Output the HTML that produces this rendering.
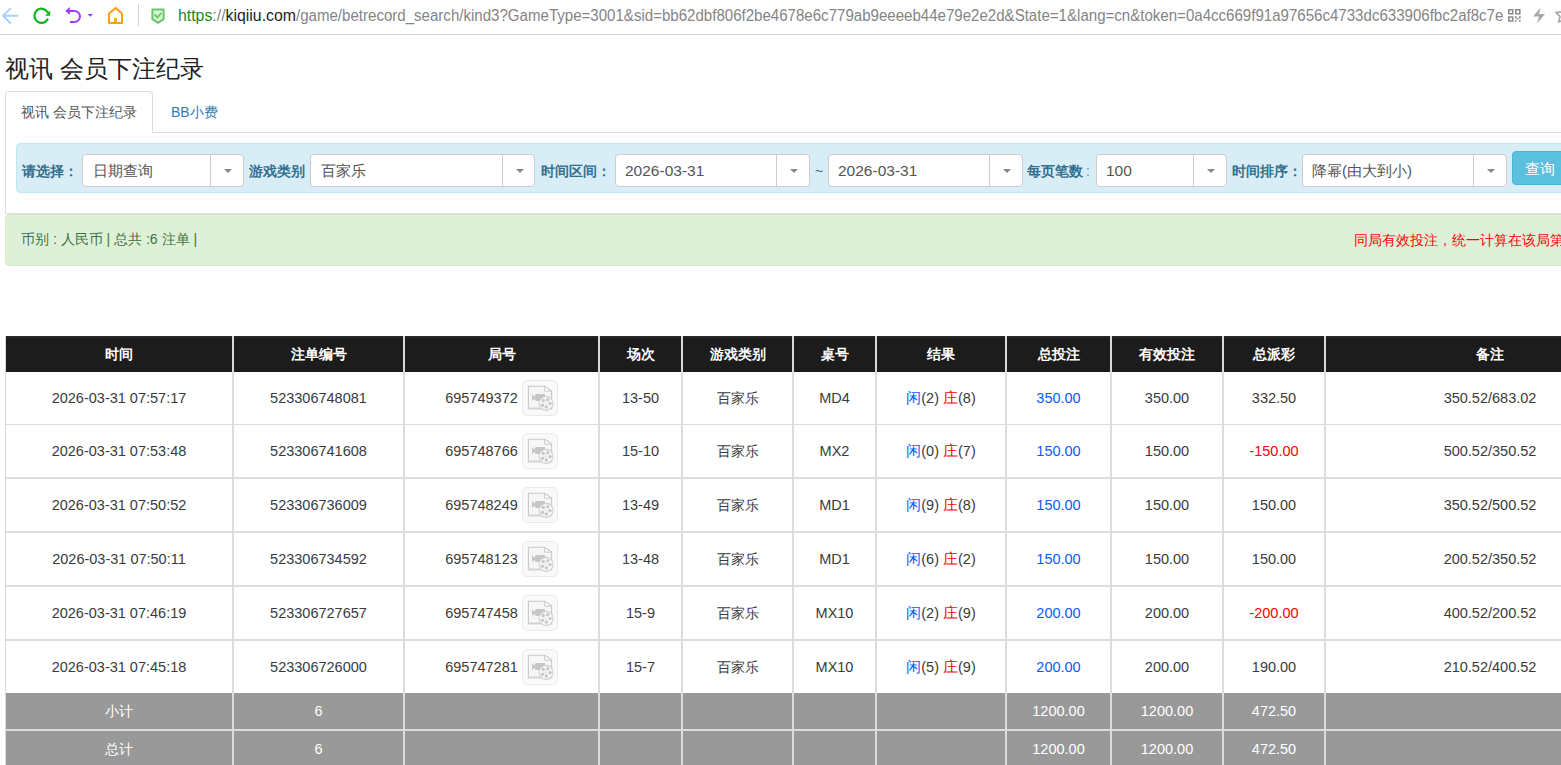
<!DOCTYPE html>
<html><head><meta charset="utf-8">
<style>
*{box-sizing:border-box;margin:0;padding:0}
html,body{width:1561px;height:765px;overflow:hidden;background:#fff}
body{font-family:"Liberation Sans",sans-serif;color:#3b3b3b;position:relative}
.abs{position:absolute}
#bar{position:absolute;left:0;top:0;width:1561px;height:35px;background:#fff;border-bottom:1px solid #cfcfcf}
#url{position:absolute;left:178px;top:6px;font-size:16px;line-height:20px;white-space:nowrap;color:#858585;transform-origin:0 0;transform:scaleX(0.99)}
#url2{position:absolute;left:296px;top:6px;font-size:16px;line-height:20px;white-space:nowrap;color:#858585;transform-origin:0 0;transform:scaleX(0.9415)}
#url .g{color:#1a8a1a}
#url .d{color:#1e1e1e}
#title{position:absolute;left:5px;top:52.5px;font-size:24px;line-height:32px;color:#222;white-space:nowrap}
.tab{position:absolute;font-size:14px;line-height:16px;white-space:nowrap}
#tab1box{position:absolute;left:5px;top:91px;width:148px;height:42px;border:1px solid #ddd;border-bottom:none;border-radius:4px 4px 0 0;background:#fff}
#tabline{position:absolute;left:152px;top:132px;width:1409px;height:1px;background:#ddd}
#pane{position:absolute;left:5px;top:132px;width:1600px;height:82px;border-left:1px solid #ddd;border-bottom:1px solid #ddd}
#filter{position:absolute;left:16px;top:143px;width:1600px;height:50px;background:#d9edf7;border:1px solid #bce8f1;border-radius:4px}
.lbl{position:absolute;top:162px;font-size:14px;line-height:18px;font-weight:bold;color:#31708f;white-space:nowrap}
.sel{position:absolute;top:154px;height:33px;background:#fff;border:1px solid #ccc;border-radius:4px}
.sel .tx{position:absolute;left:10px;top:6px;font-size:15px;line-height:20px;color:#555;white-space:nowrap}
.sel .dv{position:absolute;top:0;bottom:0;width:1px;background:#ccc}
.sel .ct{position:absolute;top:14px;width:0;height:0;border-left:4px solid transparent;border-right:4px solid transparent;border-top:4.5px solid #888}
#btn{position:absolute;left:1512px;top:151px;width:80px;height:34px;background:#5bc0de;border:1px solid #46b8da;border-radius:4px}
#btn span{position:absolute;left:12px;top:7.5px;font-size:14.5px;line-height:18px;color:#fff}
#alert{position:absolute;left:5px;top:214px;width:1600px;height:52px;background:#dff0d8;border:1px solid #d6e9c6;border-radius:4px}
#alert .l{position:absolute;left:15px;top:16px;font-size:14px;line-height:16px;color:#3c763d;white-space:nowrap}
#alert .r{position:absolute;left:1348px;top:16.5px;font-size:14px;line-height:16px;color:#f00;white-space:nowrap}
/* table */
#tbl{position:absolute;left:5px;top:336px;width:1700px;height:430px}
.hd{position:absolute;top:336px;height:36px;background:linear-gradient(#2c2c2c 0,#1c1c1c 3px)}
.cell{position:absolute;text-align:center;white-space:nowrap;font-size:14.5px;line-height:18px}
.vl{position:absolute;width:2px}
.hl{position:absolute;left:6px;width:1600px;background:#dcdcdc}
.cj{font-size:14px}
.gr{position:absolute;left:6px;width:1600px;background:#999}
.ic{position:absolute;width:36px;height:35px;border:1px solid #ececec;border-radius:5px;background:#f8f8f8}
.b{color:#0a5cff}
.rd{color:#f00}
</style></head><body>
<div id="bar">
  <svg class="abs" style="left:0;top:0" width="1561" height="34" viewBox="0 0 1561 34">
    <!-- back arrow -->
    <g fill="none" stroke="#a9d0ff" stroke-width="2" stroke-linecap="round" stroke-linejoin="round">
      <path d="M10.3 8.6 L3 15.8 L10.3 23 M3 15.8 H17.3"/>
    </g>
    <!-- refresh -->
    <g fill="none" stroke="#11b51a" stroke-width="2.2" stroke-linecap="round">
      <path d="M47.6 19.4 A7.1 7.1 0 1 1 47.6 12.2"/>
    </g>
    <path d="M50.2 10.6 L50.2 15.8 L45 15.8 Z" fill="#11b51a"/>
    <!-- undo -->
    <g fill="none" stroke="#a23cff" stroke-width="2" stroke-linecap="butt">
      <path d="M69 10.9 H74.4 A5.55 5.55 0 0 1 74.4 22 H70"/>
    </g>
    <path d="M65.2 11 L69.8 7 L69.8 15 Z" fill="#a23cff"/>
    <path d="M87.5 13.9 H93.1 L90.3 16.8 Z" fill="#a23cff"/>
    <!-- home -->
    <g fill="none" stroke="#ff9f0a" stroke-width="2" stroke-linejoin="round">
      <path d="M109 23 V13.6 L115.5 7.9 L122 13.6 V23 Z"/>
    </g>
    <rect x="114.2" y="18" width="2.6" height="5" fill="#ff9f0a"/>
    <!-- separator -->
    <rect x="138" y="4" width="1" height="22" fill="#d0d0d0"/>
    <!-- shield -->
    <path d="M152.4 9.4 H163.6 V19.2 L158 22.8 L152.4 19.2 Z" fill="#d2fbd2" stroke="#6cc46c" stroke-width="2" stroke-linejoin="round"/>
    <path d="M154.4 14.3 L157.5 17.4 L161.3 13" fill="none" stroke="#6cc46c" stroke-width="1.9"/>
    <!-- qr -->
    <g fill="#8a8a8a">
      <path fill-rule="evenodd" d="M1508 9 h5.5 v5.6 h-5.5z M1509.6 10.6 v2.4 h2.3 v-2.4z"/>
      <path fill-rule="evenodd" d="M1515 9 h5.6 v5.6 h-5.6z M1516.6 10.6 v2.4 h2.4 v-2.4z"/>
      <path fill-rule="evenodd" d="M1508 16.2 h5.5 v5.6 h-5.5z M1509.6 17.8 v2.4 h2.3 v-2.4z"/>
      <rect x="1515" y="16.2" width="1.6" height="2.2"/>
      <rect x="1519" y="16.2" width="1.6" height="2.2"/>
      <rect x="1516.6" y="18.2" width="2.4" height="1.2"/>
      <rect x="1515" y="20.2" width="1.6" height="1.6"/>
      <rect x="1519" y="20.2" width="1.6" height="1.6"/>
    </g>
    <!-- lightning -->
    <path d="M1540.6 7.5 L1533 16.5 H1539 L1537 23.5 L1545 14 H1539 Z" fill="#a9a9a9"/>
    <!-- star -->
    <path d="M1566 12 L1556 12.4 L1560 16.6 L1558.6 22 L1566 19" fill="none" stroke="#a9a9a9" stroke-width="1.7" stroke-linejoin="round"/>
  </svg>
  <div id="url"><span class="g">https</span>://<span class="d">kiqiiu.com</span></div><div id="url2">/game/betrecord_search/kind3?GameType=3001&amp;sid=bb62dbf806f2be4678e6c779ab9eeeeb44e79e2e2d&amp;State=1&amp;lang=cn&amp;token=0a4cc669f91a97656c4733dc633906fbc2af8c7e</div>
</div>

<div id="title">视讯 会员下注纪录</div>
<div id="pane"></div>
<div id="tabline"></div>
<div id="tab1box"></div>
<div class="tab" style="left:21px;top:104px;color:#555">视讯 会员下注纪录</div>
<div class="tab" style="left:171px;top:104px;color:#337ab7">BB小费</div>

<div id="filter"></div>
<div class="lbl" style="left:22px">请选择：</div>
<div class="sel" style="left:82px;width:162px"><span class="tx">日期查询</span><span class="dv" style="left:127px"></span><span class="ct" style="left:141px"></span></div>
<div class="lbl" style="left:249px">游戏类别</div>
<div class="sel" style="left:310px;width:225px"><span class="tx">百家乐</span><span class="dv" style="left:191px"></span><span class="ct" style="left:205px"></span></div>
<div class="lbl" style="left:541px">时间区间：</div>
<div class="sel" style="left:615px;width:195px"><span class="tx" style="left:9px;font-size:15.5px">2026-03-31</span><span class="dv" style="left:160px"></span><span class="ct" style="left:174px"></span></div>
<div class="lbl" style="left:815px;font-weight:normal">~</div>
<div class="sel" style="left:828px;width:195px"><span class="tx" style="left:9px;font-size:15.5px">2026-03-31</span><span class="dv" style="left:160px"></span><span class="ct" style="left:174px"></span></div>
<div class="lbl" style="left:1027px">每页笔数<span style="font-weight:normal;color:#6a8fa3;margin-left:3px">:</span></div>
<div class="sel" style="left:1096px;width:131px"><span class="tx" style="left:9px;font-size:15.5px">100</span><span class="dv" style="left:96px"></span><span class="ct" style="left:110px"></span></div>
<div class="lbl" style="left:1232px">时间排序：</div>
<div class="sel" style="left:1302px;width:205px"><span class="tx" style="left:9px">降幂(由大到小)</span><span class="dv" style="left:170px"></span><span class="ct" style="left:184px"></span></div>
<div id="btn"><span>查询</span></div>

<div id="alert"><span class="l">币别 : 人民币 | 总共 :6 注单 |</span><span class="r">同局有效投注，统一计算在该局第一笔注单</span></div>

<div class="hd" style="left:6px;width:1600px"></div>
<div class="gr" style="top:693px;height:36px"></div>
<div class="gr" style="top:731px;height:40px"></div>
<div class="hl" style="top:424px;height:1px"></div>
<div class="hl" style="top:477px;height:2px"></div>
<div class="hl" style="top:531px;height:2px"></div>
<div class="hl" style="top:585px;height:2px"></div>
<div class="hl" style="top:639px;height:2px"></div>
<div class="hl" style="top:729px;height:2px"></div>
<div class="abs" style="left:5px;top:336px;width:1px;height:430px;background:#d8d8d8"></div>
<div class="vl" style="left:232px;top:336px;height:36px;background:#d9d9d9"></div>
<div class="vl" style="left:232px;top:372px;height:394px;background:#dcdcdc"></div>
<div class="vl" style="left:403px;top:336px;height:36px;background:#d9d9d9"></div>
<div class="vl" style="left:403px;top:372px;height:394px;background:#dcdcdc"></div>
<div class="vl" style="left:598px;top:336px;height:36px;background:#d9d9d9"></div>
<div class="vl" style="left:598px;top:372px;height:394px;background:#dcdcdc"></div>
<div class="vl" style="left:681px;top:336px;height:36px;background:#d9d9d9"></div>
<div class="vl" style="left:681px;top:372px;height:394px;background:#dcdcdc"></div>
<div class="vl" style="left:792px;top:336px;height:36px;background:#d9d9d9"></div>
<div class="vl" style="left:792px;top:372px;height:394px;background:#dcdcdc"></div>
<div class="vl" style="left:875px;top:336px;height:36px;background:#d9d9d9"></div>
<div class="vl" style="left:875px;top:372px;height:394px;background:#dcdcdc"></div>
<div class="vl" style="left:1005px;top:336px;height:36px;background:#d9d9d9"></div>
<div class="vl" style="left:1005px;top:372px;height:394px;background:#dcdcdc"></div>
<div class="vl" style="left:1110px;top:336px;height:36px;background:#d9d9d9"></div>
<div class="vl" style="left:1110px;top:372px;height:394px;background:#dcdcdc"></div>
<div class="vl" style="left:1222px;top:336px;height:36px;background:#d9d9d9"></div>
<div class="vl" style="left:1222px;top:372px;height:394px;background:#dcdcdc"></div>
<div class="vl" style="left:1324px;top:336px;height:36px;background:#d9d9d9"></div>
<div class="vl" style="left:1324px;top:372px;height:394px;background:#dcdcdc"></div>
<div class="cell" style="left:6px;width:226px;top:345px;color:#fff;font-weight:bold;font-size:14px">时间</div>
<div class="cell" style="left:234px;width:169px;top:345px;color:#fff;font-weight:bold;font-size:14px">注单编号</div>
<div class="cell" style="left:405px;width:193px;top:345px;color:#fff;font-weight:bold;font-size:14px">局号</div>
<div class="cell" style="left:600px;width:81px;top:345px;color:#fff;font-weight:bold;font-size:14px">场次</div>
<div class="cell" style="left:683px;width:109px;top:345px;color:#fff;font-weight:bold;font-size:14px">游戏类别</div>
<div class="cell" style="left:794px;width:81px;top:345px;color:#fff;font-weight:bold;font-size:14px">桌号</div>
<div class="cell" style="left:877px;width:128px;top:345px;color:#fff;font-weight:bold;font-size:14px">结果</div>
<div class="cell" style="left:1007px;width:103px;top:345px;color:#fff;font-weight:bold;font-size:14px">总投注</div>
<div class="cell" style="left:1112px;width:110px;top:345px;color:#fff;font-weight:bold;font-size:14px">有效投注</div>
<div class="cell" style="left:1224px;width:100px;top:345px;color:#fff;font-weight:bold;font-size:14px">总派彩</div>
<div class="cell" style="left:1326px;width:328px;top:345px;color:#fff;font-weight:bold;font-size:14px">备注</div>
<div class="cell" style="left:6px;width:226px;top:389px">2026-03-31 07:57:17</div>
<div class="cell" style="left:234px;width:169px;top:389px">523306748081</div>
<div class="cell" style="left:405px;width:193px;top:389px"><span style="position:relative;left:-20px">695749372</span></div>
<svg class="abs" style="left:522px;top:380px" width="36" height="36" viewBox="0 0 36 36"><rect x="0.5" y="0.5" width="35" height="35" rx="5" fill="#f9f9f9" stroke="#e9e9e9"/><path d="M6.4 6.3 H22.6 L29.6 11.1 V28.6 H6.4 Z" fill="#f6f6f6" stroke="#c9c9c9" stroke-width="1.1"/><rect x="6" y="27.6" width="17" height="1.6" fill="#d2d2d2"/><path d="M22.6 6.3 V11.1 H29.6 Z" fill="#fff" stroke="#c9c9c9" stroke-width="1"/><path d="M10 14.2 L12.2 16.6 L13.9 14 V21 L12.2 19 L10 21 Z" fill="#c6c6c6"/><rect x="13.7" y="14" width="9.2" height="7" fill="#c6c6c6"/><circle cx="24.1" cy="23.4" r="7" fill="#f7f7f7" stroke="#cfcfcf" stroke-width="1.1"/><circle cx="21.3" cy="20.5" r="1.7" fill="#c8c8c8"/><circle cx="25.7" cy="19.7" r="1.7" fill="#c8c8c8"/><circle cx="28.1" cy="23.6" r="1.7" fill="#c8c8c8"/><circle cx="24.4" cy="27" r="1.7" fill="#c8c8c8"/><circle cx="20.5" cy="25.2" r="1.7" fill="#c8c8c8"/><circle cx="23.9" cy="23.4" r="0.6" fill="#c8c8c8"/></svg>
<div class="cell" style="left:600px;width:81px;top:389px">13-50</div>
<div class="cell cj" style="left:683px;width:109px;top:389px">百家乐</div>
<div class="cell" style="left:794px;width:81px;top:389px">MD4</div>
<div class="cell" style="left:877px;width:128px;top:389px"><span class="b">闲</span>(2) <span class="rd">庄</span>(8)</div>
<div class="cell b" style="left:1007px;width:103px;top:389px">350.00</div>
<div class="cell" style="left:1112px;width:110px;top:389px">350.00</div>
<div class="cell" style="left:1224px;width:100px;top:389px">332.50</div>
<div class="cell" style="left:1326px;width:328px;top:389px">350.52/683.02</div>
<div class="cell" style="left:6px;width:226px;top:442px">2026-03-31 07:53:48</div>
<div class="cell" style="left:234px;width:169px;top:442px">523306741608</div>
<div class="cell" style="left:405px;width:193px;top:442px"><span style="position:relative;left:-20px">695748766</span></div>
<svg class="abs" style="left:522px;top:433px" width="36" height="36" viewBox="0 0 36 36"><rect x="0.5" y="0.5" width="35" height="35" rx="5" fill="#f9f9f9" stroke="#e9e9e9"/><path d="M6.4 6.3 H22.6 L29.6 11.1 V28.6 H6.4 Z" fill="#f6f6f6" stroke="#c9c9c9" stroke-width="1.1"/><rect x="6" y="27.6" width="17" height="1.6" fill="#d2d2d2"/><path d="M22.6 6.3 V11.1 H29.6 Z" fill="#fff" stroke="#c9c9c9" stroke-width="1"/><path d="M10 14.2 L12.2 16.6 L13.9 14 V21 L12.2 19 L10 21 Z" fill="#c6c6c6"/><rect x="13.7" y="14" width="9.2" height="7" fill="#c6c6c6"/><circle cx="24.1" cy="23.4" r="7" fill="#f7f7f7" stroke="#cfcfcf" stroke-width="1.1"/><circle cx="21.3" cy="20.5" r="1.7" fill="#c8c8c8"/><circle cx="25.7" cy="19.7" r="1.7" fill="#c8c8c8"/><circle cx="28.1" cy="23.6" r="1.7" fill="#c8c8c8"/><circle cx="24.4" cy="27" r="1.7" fill="#c8c8c8"/><circle cx="20.5" cy="25.2" r="1.7" fill="#c8c8c8"/><circle cx="23.9" cy="23.4" r="0.6" fill="#c8c8c8"/></svg>
<div class="cell" style="left:600px;width:81px;top:442px">15-10</div>
<div class="cell cj" style="left:683px;width:109px;top:442px">百家乐</div>
<div class="cell" style="left:794px;width:81px;top:442px">MX2</div>
<div class="cell" style="left:877px;width:128px;top:442px"><span class="b">闲</span>(0) <span class="rd">庄</span>(7)</div>
<div class="cell b" style="left:1007px;width:103px;top:442px">150.00</div>
<div class="cell" style="left:1112px;width:110px;top:442px">150.00</div>
<div class="cell rd" style="left:1224px;width:100px;top:442px">-150.00</div>
<div class="cell" style="left:1326px;width:328px;top:442px">500.52/350.52</div>
<div class="cell" style="left:6px;width:226px;top:496px">2026-03-31 07:50:52</div>
<div class="cell" style="left:234px;width:169px;top:496px">523306736009</div>
<div class="cell" style="left:405px;width:193px;top:496px"><span style="position:relative;left:-20px">695748249</span></div>
<svg class="abs" style="left:522px;top:487px" width="36" height="36" viewBox="0 0 36 36"><rect x="0.5" y="0.5" width="35" height="35" rx="5" fill="#f9f9f9" stroke="#e9e9e9"/><path d="M6.4 6.3 H22.6 L29.6 11.1 V28.6 H6.4 Z" fill="#f6f6f6" stroke="#c9c9c9" stroke-width="1.1"/><rect x="6" y="27.6" width="17" height="1.6" fill="#d2d2d2"/><path d="M22.6 6.3 V11.1 H29.6 Z" fill="#fff" stroke="#c9c9c9" stroke-width="1"/><path d="M10 14.2 L12.2 16.6 L13.9 14 V21 L12.2 19 L10 21 Z" fill="#c6c6c6"/><rect x="13.7" y="14" width="9.2" height="7" fill="#c6c6c6"/><circle cx="24.1" cy="23.4" r="7" fill="#f7f7f7" stroke="#cfcfcf" stroke-width="1.1"/><circle cx="21.3" cy="20.5" r="1.7" fill="#c8c8c8"/><circle cx="25.7" cy="19.7" r="1.7" fill="#c8c8c8"/><circle cx="28.1" cy="23.6" r="1.7" fill="#c8c8c8"/><circle cx="24.4" cy="27" r="1.7" fill="#c8c8c8"/><circle cx="20.5" cy="25.2" r="1.7" fill="#c8c8c8"/><circle cx="23.9" cy="23.4" r="0.6" fill="#c8c8c8"/></svg>
<div class="cell" style="left:600px;width:81px;top:496px">13-49</div>
<div class="cell cj" style="left:683px;width:109px;top:496px">百家乐</div>
<div class="cell" style="left:794px;width:81px;top:496px">MD1</div>
<div class="cell" style="left:877px;width:128px;top:496px"><span class="b">闲</span>(9) <span class="rd">庄</span>(8)</div>
<div class="cell b" style="left:1007px;width:103px;top:496px">150.00</div>
<div class="cell" style="left:1112px;width:110px;top:496px">150.00</div>
<div class="cell" style="left:1224px;width:100px;top:496px">150.00</div>
<div class="cell" style="left:1326px;width:328px;top:496px">350.52/500.52</div>
<div class="cell" style="left:6px;width:226px;top:550px">2026-03-31 07:50:11</div>
<div class="cell" style="left:234px;width:169px;top:550px">523306734592</div>
<div class="cell" style="left:405px;width:193px;top:550px"><span style="position:relative;left:-20px">695748123</span></div>
<svg class="abs" style="left:522px;top:541px" width="36" height="36" viewBox="0 0 36 36"><rect x="0.5" y="0.5" width="35" height="35" rx="5" fill="#f9f9f9" stroke="#e9e9e9"/><path d="M6.4 6.3 H22.6 L29.6 11.1 V28.6 H6.4 Z" fill="#f6f6f6" stroke="#c9c9c9" stroke-width="1.1"/><rect x="6" y="27.6" width="17" height="1.6" fill="#d2d2d2"/><path d="M22.6 6.3 V11.1 H29.6 Z" fill="#fff" stroke="#c9c9c9" stroke-width="1"/><path d="M10 14.2 L12.2 16.6 L13.9 14 V21 L12.2 19 L10 21 Z" fill="#c6c6c6"/><rect x="13.7" y="14" width="9.2" height="7" fill="#c6c6c6"/><circle cx="24.1" cy="23.4" r="7" fill="#f7f7f7" stroke="#cfcfcf" stroke-width="1.1"/><circle cx="21.3" cy="20.5" r="1.7" fill="#c8c8c8"/><circle cx="25.7" cy="19.7" r="1.7" fill="#c8c8c8"/><circle cx="28.1" cy="23.6" r="1.7" fill="#c8c8c8"/><circle cx="24.4" cy="27" r="1.7" fill="#c8c8c8"/><circle cx="20.5" cy="25.2" r="1.7" fill="#c8c8c8"/><circle cx="23.9" cy="23.4" r="0.6" fill="#c8c8c8"/></svg>
<div class="cell" style="left:600px;width:81px;top:550px">13-48</div>
<div class="cell cj" style="left:683px;width:109px;top:550px">百家乐</div>
<div class="cell" style="left:794px;width:81px;top:550px">MD1</div>
<div class="cell" style="left:877px;width:128px;top:550px"><span class="b">闲</span>(6) <span class="rd">庄</span>(2)</div>
<div class="cell b" style="left:1007px;width:103px;top:550px">150.00</div>
<div class="cell" style="left:1112px;width:110px;top:550px">150.00</div>
<div class="cell" style="left:1224px;width:100px;top:550px">150.00</div>
<div class="cell" style="left:1326px;width:328px;top:550px">200.52/350.52</div>
<div class="cell" style="left:6px;width:226px;top:604px">2026-03-31 07:46:19</div>
<div class="cell" style="left:234px;width:169px;top:604px">523306727657</div>
<div class="cell" style="left:405px;width:193px;top:604px"><span style="position:relative;left:-20px">695747458</span></div>
<svg class="abs" style="left:522px;top:595px" width="36" height="36" viewBox="0 0 36 36"><rect x="0.5" y="0.5" width="35" height="35" rx="5" fill="#f9f9f9" stroke="#e9e9e9"/><path d="M6.4 6.3 H22.6 L29.6 11.1 V28.6 H6.4 Z" fill="#f6f6f6" stroke="#c9c9c9" stroke-width="1.1"/><rect x="6" y="27.6" width="17" height="1.6" fill="#d2d2d2"/><path d="M22.6 6.3 V11.1 H29.6 Z" fill="#fff" stroke="#c9c9c9" stroke-width="1"/><path d="M10 14.2 L12.2 16.6 L13.9 14 V21 L12.2 19 L10 21 Z" fill="#c6c6c6"/><rect x="13.7" y="14" width="9.2" height="7" fill="#c6c6c6"/><circle cx="24.1" cy="23.4" r="7" fill="#f7f7f7" stroke="#cfcfcf" stroke-width="1.1"/><circle cx="21.3" cy="20.5" r="1.7" fill="#c8c8c8"/><circle cx="25.7" cy="19.7" r="1.7" fill="#c8c8c8"/><circle cx="28.1" cy="23.6" r="1.7" fill="#c8c8c8"/><circle cx="24.4" cy="27" r="1.7" fill="#c8c8c8"/><circle cx="20.5" cy="25.2" r="1.7" fill="#c8c8c8"/><circle cx="23.9" cy="23.4" r="0.6" fill="#c8c8c8"/></svg>
<div class="cell" style="left:600px;width:81px;top:604px">15-9</div>
<div class="cell cj" style="left:683px;width:109px;top:604px">百家乐</div>
<div class="cell" style="left:794px;width:81px;top:604px">MX10</div>
<div class="cell" style="left:877px;width:128px;top:604px"><span class="b">闲</span>(2) <span class="rd">庄</span>(9)</div>
<div class="cell b" style="left:1007px;width:103px;top:604px">200.00</div>
<div class="cell" style="left:1112px;width:110px;top:604px">200.00</div>
<div class="cell rd" style="left:1224px;width:100px;top:604px">-200.00</div>
<div class="cell" style="left:1326px;width:328px;top:604px">400.52/200.52</div>
<div class="cell" style="left:6px;width:226px;top:658px">2026-03-31 07:45:18</div>
<div class="cell" style="left:234px;width:169px;top:658px">523306726000</div>
<div class="cell" style="left:405px;width:193px;top:658px"><span style="position:relative;left:-20px">695747281</span></div>
<svg class="abs" style="left:522px;top:649px" width="36" height="36" viewBox="0 0 36 36"><rect x="0.5" y="0.5" width="35" height="35" rx="5" fill="#f9f9f9" stroke="#e9e9e9"/><path d="M6.4 6.3 H22.6 L29.6 11.1 V28.6 H6.4 Z" fill="#f6f6f6" stroke="#c9c9c9" stroke-width="1.1"/><rect x="6" y="27.6" width="17" height="1.6" fill="#d2d2d2"/><path d="M22.6 6.3 V11.1 H29.6 Z" fill="#fff" stroke="#c9c9c9" stroke-width="1"/><path d="M10 14.2 L12.2 16.6 L13.9 14 V21 L12.2 19 L10 21 Z" fill="#c6c6c6"/><rect x="13.7" y="14" width="9.2" height="7" fill="#c6c6c6"/><circle cx="24.1" cy="23.4" r="7" fill="#f7f7f7" stroke="#cfcfcf" stroke-width="1.1"/><circle cx="21.3" cy="20.5" r="1.7" fill="#c8c8c8"/><circle cx="25.7" cy="19.7" r="1.7" fill="#c8c8c8"/><circle cx="28.1" cy="23.6" r="1.7" fill="#c8c8c8"/><circle cx="24.4" cy="27" r="1.7" fill="#c8c8c8"/><circle cx="20.5" cy="25.2" r="1.7" fill="#c8c8c8"/><circle cx="23.9" cy="23.4" r="0.6" fill="#c8c8c8"/></svg>
<div class="cell" style="left:600px;width:81px;top:658px">15-7</div>
<div class="cell cj" style="left:683px;width:109px;top:658px">百家乐</div>
<div class="cell" style="left:794px;width:81px;top:658px">MX10</div>
<div class="cell" style="left:877px;width:128px;top:658px"><span class="b">闲</span>(5) <span class="rd">庄</span>(9)</div>
<div class="cell b" style="left:1007px;width:103px;top:658px">200.00</div>
<div class="cell" style="left:1112px;width:110px;top:658px">200.00</div>
<div class="cell" style="left:1224px;width:100px;top:658px">190.00</div>
<div class="cell" style="left:1326px;width:328px;top:658px">210.52/400.52</div>
<div class="cell cj" style="left:6px;width:226px;top:702px;color:#fff">小计</div>
<div class="cell" style="left:234px;width:169px;top:702px;color:#fff">6</div>
<div class="cell" style="left:1007px;width:103px;top:702px;color:#fff">1200.00</div>
<div class="cell" style="left:1112px;width:110px;top:702px;color:#fff">1200.00</div>
<div class="cell" style="left:1224px;width:100px;top:702px;color:#fff">472.50</div>
<div class="cell cj" style="left:6px;width:226px;top:740px;color:#fff">总计</div>
<div class="cell" style="left:234px;width:169px;top:740px;color:#fff">6</div>
<div class="cell" style="left:1007px;width:103px;top:740px;color:#fff">1200.00</div>
<div class="cell" style="left:1112px;width:110px;top:740px;color:#fff">1200.00</div>
<div class="cell" style="left:1224px;width:100px;top:740px;color:#fff">472.50</div>
</body></html>
